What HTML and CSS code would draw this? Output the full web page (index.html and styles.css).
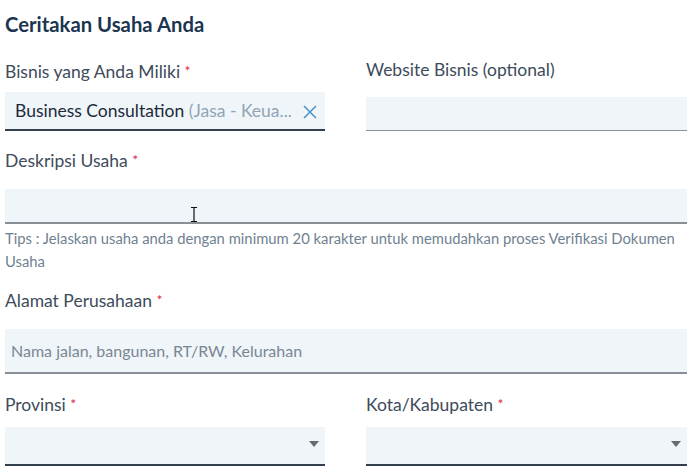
FILE: index.html
```html
<!DOCTYPE html>
<html lang="id">
<head>
<meta charset="utf-8">
<title>Ceritakan Usaha Anda</title>
<link rel="stylesheet" href="styles.css">
</head>
<body>
<main class="form">
  <h2 class="title">Ceritakan Usaha Anda</h2>

  <div class="row row-top">
    <div class="field">
      <label class="label">Bisnis yang Anda Miliki <span class="req">*</span></label>
      <div class="input input-select input-dark">
        <span class="value"><span class="main">Business Consultation</span> <span class="sub">(Jasa - Keua...</span></span>
        <svg class="clear" width="14" height="14" viewBox="0 0 14 14"><path d="M1 1 L13 13 M13 1 L1 13" stroke="#4a90c8" stroke-width="1.5" fill="none"/></svg>
      </div>
    </div>
    <div class="field">
      <label class="label label-web">Website Bisnis (optional)</label>
      <div class="input input-web"></div>
    </div>
  </div>

  <div class="field field-desc">
    <label class="label">Deskripsi Usaha <span class="req">*</span></label>
    <div class="input input-desc">
      <svg class="cursor" width="8" height="15" viewBox="0 0 8 15"><path d="M1 0.5 H7 M4 0.5 V14.5 M1 14.5 H7" stroke="#111" stroke-width="1.2" fill="none"/></svg>
    </div>
    <p class="tips">Tips : Jelaskan usaha anda dengan minimum 20 karakter untuk memudahkan proses Verifikasi Dokumen Usaha</p>
  </div>

  <div class="field field-addr">
    <label class="label">Alamat Perusahaan <span class="req">*</span></label>
    <div class="input input-addr"><span class="placeholder">Nama jalan, bangunan, RT/RW, Kelurahan</span></div>
  </div>

  <div class="row row-bottom">
    <div class="field">
      <label class="label">Provinsi <span class="req">*</span></label>
      <div class="input input-drop input-dark"><span class="caret"></span></div>
    </div>
    <div class="field">
      <label class="label">Kota/Kabupaten <span class="req">*</span></label>
      <div class="input input-drop input-dark"><span class="caret"></span></div>
    </div>
  </div>
</main>
</body>
</html>
```

FILE: styles.css
```css
* { box-sizing: border-box; }
html, body { margin: 0; padding: 0; background: #fff; }
body {
  font-family: Lato, "Open Sans", "Liberation Sans", sans-serif;
  color: #3b4a5a;
}
.form {
  width: 698px;
  padding: 10px 11px 0 5px;
}
.title {
  margin: 0;
  font-size: 20.3px;
  line-height: 28px;
  font-weight: 700;
  color: #1b3550;
}
.row {
  display: grid;
  grid-template-columns: 320px 321px;
  column-gap: 41px;
}
.row-top { margin-top: 24px; }
.label {
  display: block;
  font-size: 17.5px;
  line-height: 20px;
  height: 20px;
  color: #3d4b5b;
}
.label-web { margin-top: -2px; }
.req { color: #e0284a; font-size: 14px; line-height: 0; vertical-align: 2px; }
.input {
  position: relative;
  background: #eff5f9;
  border-bottom: 1px solid #8a8e96;
}
.input-dark { border-bottom: 2px solid #34404e; }
.input-select {
  margin-top: 10px;
  height: 39px;
  display: flex;
  align-items: center;
  padding: 0 8px 0 10px;
  justify-content: space-between;
}
.value { font-size: 17.5px; white-space: nowrap; }
.main { color: #1c2b3a; }
.sub { color: #91a4b5; }
.clear { display: block; margin-top: 3px; }
.input-web { margin-top: 17px; height: 34px; }
.field-desc { margin-top: 20px; }
.input-desc { margin-top: 18px; height: 35px; border-bottom: 2px solid #8a8e96; }
.cursor { position: absolute; left: 185px; top: 18px; }
.tips {
  margin: 3px 0 0;
  font-size: 14.8px;
  line-height: 23px;
  color: #6f8191;
}
.field-addr { margin-top: 18px; }
.input-addr {
  margin-top: 18px;
  height: 45px;
  display: flex;
  align-items: center;
  padding: 0 6px;
  border-bottom: 2px solid #8a8e96;
}
.placeholder { font-size: 16px; color: #7b8793; }
.row-bottom { margin-top: 21px; }
.input-drop { margin-top: 12px; height: 39px; }
.caret {
  position: absolute;
  right: 6px;
  top: 14px;
  width: 0; height: 0;
  border-left: 5px solid transparent;
  border-right: 5px solid transparent;
  border-top: 6px solid #666b70;
}
```
